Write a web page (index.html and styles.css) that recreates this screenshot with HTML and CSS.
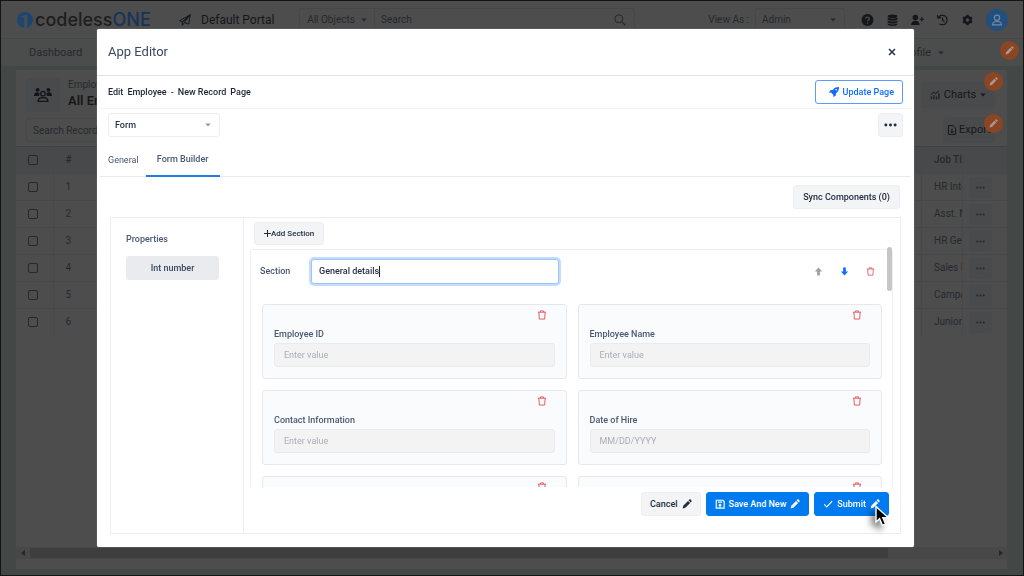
FILE: index.html
```html
<!DOCTYPE html>
<html lang="en">
<head>
<meta charset="utf-8">
<title>codelessONE - App Editor</title>
<link rel="stylesheet" href="styles.css">
</head>
<body>
<svg class="sprite" aria-hidden="true">
  <symbol id="trash" viewBox="0 0 16 16"><path d="M1.500 3.500h13M5.500 3V1.500h5V3M3 3.500l.8 11h8.400l.8-11" fill="none" stroke="currentColor" stroke-width="1.500"/></symbol>
  <symbol id="pencil" viewBox="0 0 16 16"><path d="M1 15l1-4.300L9.600 3l3.400 3.400-7.700 7.700zM10.500 2.100l1.200-1.200c.6-.6 1.400-.6 2 0l1.400 1.400c.6.6.6 1.400 0 2l-1.200 1.200z" fill="currentColor"/></symbol>
  <symbol id="caret" viewBox="0 0 8 5"><path d="M.5.5h7L4 4.500z" fill="currentColor"/></symbol>
  <symbol id="dots" viewBox="0 0 14 4"><g fill="currentColor"><circle cx="2" cy="2" r="1.600"/><circle cx="7" cy="2" r="1.600"/><circle cx="12" cy="2" r="1.600"/></g></symbol>
  <symbol id="arrow" viewBox="0 0 10 10"><path d="M5 .5l4 4.500H6.500v4.500h-3V5H1z" fill="currentColor"/></symbol>
</svg>

<div class="app">
  <header class="topbar">
    <a class="logo" href="#">
      <svg class="logo-mark" viewBox="0 0 16 16"><circle cx="8" cy="8" r="8" fill="#1c4670"/><path d="M4 5.200h3.200V16h3V3H7.500C6.800 4.200 5.800 4.200 4 4.200z" fill="#4d4d4d"/></svg>
      <span>codeless<b>ONE</b></span>
    </a>
    <div class="portal">
      <svg class="i12" viewBox="0 0 16 16"><path d="M15 1L1 9l3.500 1.700zM15 1L4.500 10.700V15l2.500-3M15 1l-2 12.500-6-2.200z" fill="none" stroke="currentColor" stroke-width="1.300" stroke-linejoin="round"/></svg>
      <span>Default Portal</span>
    </div>
    <div class="search">
      <button class="search-scope" type="button">All Objects <svg class="caret"><use href="#caret"/></svg></button>
      <input type="search" placeholder="Search" aria-label="Search">
      <svg class="i12" viewBox="0 0 16 16"><circle cx="6.500" cy="6.500" r="5.300" fill="none" stroke="currentColor" stroke-width="1.300"/><path d="M10.500 10.500L15 15" stroke="currentColor" stroke-width="1.500"/></svg>
    </div>
    <label class="viewas" for="role">View As :</label>
    <div class="select role"><select id="role"><option>Admin</option></select><svg class="caret"><use href="#caret"/></svg></div>
    <nav class="tools" aria-label="Tools">
      <button type="button" aria-label="Help"><svg viewBox="0 0 16 16"><circle cx="8" cy="8" r="8" fill="currentColor"/><path d="M5.500 6.300C5.500 3.400 10.500 3.400 10.500 6.200c0 1.700-2.400 1.700-2.400 3.400" fill="none" stroke="#4d4d4d" stroke-width="1.700"/><circle cx="8.100" cy="12" r="1.100" fill="#4d4d4d"/></svg></button>
      <button type="button" aria-label="Data"><svg viewBox="0 0 16 16"><g fill="currentColor"><ellipse cx="8" cy="3" rx="6.500" ry="2.500"/><path d="M1.500 4.800c2 2 11 2 13 0v2.400c-1 2.400-12 2.400-13 0zM1.500 8.600c2 2 11 2 13 0V11c-1 2.400-12 2.400-13 0zM1.500 12.400c2 2 11 2 13 0v1.200c-1 3-12 3-13 0z"/></g></svg></button>
      <button type="button" aria-label="Invite user"><svg viewBox="0 0 18 16"><circle cx="6" cy="4.500" r="3.800" fill="currentColor"/><path d="M0 15c0-8 12-8 12 0z" fill="currentColor"/><path d="M15 4v6M12 7h6" stroke="currentColor" stroke-width="1.600"/></svg></button>
      <button type="button" aria-label="History"><svg viewBox="0 0 16 16"><path d="M2.500 4.800A6.300 6.300 0 1 1 4 13M1.200 1.500l.8 4 4-.6M8.200 4.500V8.500l2.600 1.800" fill="none" stroke="currentColor" stroke-width="1.600"/></svg></button>
      <button type="button" aria-label="Settings"><svg viewBox="0 0 16 16"><circle cx="8" cy="8" r="4" fill="none" stroke="currentColor" stroke-width="3.400"/><path d="M8 1v3M8 12v3M2 4.500l2.600 1.500M11.400 10l2.600 1.500M2 11.500l2.600-1.500M11.400 6L14 4.500" stroke="currentColor" stroke-width="3"/></svg></button>
    </nav>
    <button class="avatar" type="button" aria-label="Account"><svg viewBox="0 0 16 16"><g fill="none" stroke="currentColor" stroke-width="1.500"><circle cx="8" cy="5" r="3.500"/><path d="M2 14.500c0-6 12-6 12 0z"/></g></svg></button>
  </header>

  <nav class="menubar">
    <a href="#">Dashboard</a>
    <a href="#">Profile <svg class="caret"><use href="#caret"/></svg></a>
    <button class="pin pin-nav" type="button" aria-label="Edit menu"><svg><use href="#pencil"/></svg></button>
  </nav>

  <main class="workspace">
    <section class="panel">
      <div class="panel-head">
        <div class="panel-icon"><svg viewBox="0 0 20 16"><g fill="currentColor"><circle cx="4" cy="2.300" r="2.200"/><circle cx="16" cy="2.300" r="2.200"/><path d="M0 9c0-5 5-5 6.300-2.500L5.500 9zM20 9c0-5-5-5-6.300-2.500l.8 2.500z"/></g><g fill="none" stroke="currentColor" stroke-width="1.500"><circle cx="10" cy="6.500" r="2.500"/><path d="M4.500 15c0-5.500 11-5.500 11 0z"/></g></svg></div>
        <div class="panel-title"><span>Employees</span><h1>All Employees</h1></div>
        <button class="dim-btn charts" type="button"><svg class="i10" viewBox="0 0 14 14"><path d="M1 7l4-4 3 2 5-4" fill="none" stroke="currentColor" stroke-width="1.400"/><path d="M2 9v4M5.500 7.500V13M9 9v4M12.500 5v8" stroke="currentColor" stroke-width="1.600"/></svg> Charts <svg class="caret"><use href="#caret"/></svg></button>
        <span class="pin pin-corner"><svg><use href="#pencil"/></svg></span>
      </div>
      <div class="panel-tools">
        <input type="search" placeholder="Search Records" aria-label="Search Records">
        <button class="dim-btn export" type="button"><svg class="i10" viewBox="0 0 14 14"><path d="M2 .8h6.500L12 4v9.200H2zM7 5v6M4.500 8.500L7 11l2.500-2.500" fill="none" stroke="currentColor" stroke-width="1.400"/></svg> Export</button>
        <span class="pin pin-corner"><svg><use href="#pencil"/></svg></span>
      </div>
      <table class="records">
        <colgroup><col class="c-check"><col><col class="c-job"><col class="c-act"></colgroup>
        <thead><tr><th><input type="checkbox" aria-label="Select all"></th><th>#</th><th>Job Title</th><th></th></tr></thead>
        <tbody>
          <tr><td><input type="checkbox" aria-label="Select 1"></td><td>1</td><td>HR Intern</td><td><button type="button" aria-label="Row actions"><svg><use href="#dots"/></svg></button></td></tr>
          <tr><td><input type="checkbox" aria-label="Select 2"></td><td>2</td><td>Asst. Manager</td><td><button type="button" aria-label="Row actions"><svg><use href="#dots"/></svg></button></td></tr>
          <tr><td><input type="checkbox" aria-label="Select 3"></td><td>3</td><td>HR Generalist</td><td><button type="button" aria-label="Row actions"><svg><use href="#dots"/></svg></button></td></tr>
          <tr><td><input type="checkbox" aria-label="Select 4"></td><td>4</td><td>Sales Lead</td><td><button type="button" aria-label="Row actions"><svg><use href="#dots"/></svg></button></td></tr>
          <tr><td><input type="checkbox" aria-label="Select 5"></td><td>5</td><td>Campaign Lead</td><td><button type="button" aria-label="Row actions"><svg><use href="#dots"/></svg></button></td></tr>
          <tr><td><input type="checkbox" aria-label="Select 6"></td><td>6</td><td>Junior Analyst</td><td><button type="button" aria-label="Row actions"><svg><use href="#dots"/></svg></button></td></tr>
        </tbody>
      </table>
      <div class="hscroll"><svg viewBox="0 0 4 6"><path d="M4 0v6L0 3z" fill="currentColor"/></svg><div class="hscroll-track"><div class="hscroll-thumb"></div></div><svg viewBox="0 0 4 6"><path d="M0 0v6l4-3z" fill="currentColor"/></svg></div>
    </section>
  </main>
</div>

<div class="backdrop">
  <div class="modal" role="dialog" aria-labelledby="dlg-title">
    <div class="modal-head">
      <h2 id="dlg-title">App Editor</h2>
      <button type="button" class="close" aria-label="Close"><svg viewBox="0 0 8 8"><path d="M1 1l6 6M7 1L1 7" stroke="currentColor" stroke-width="1.500"/></svg></button>
    </div>
    <div class="modal-body">
      <div class="bar page-bar">
        <p class="crumb"><span>Edit</span><span>Employee</span><span>-</span><span>New Record</span><span>Page</span></p>
        <button class="btn outline" type="button"><svg class="i10" viewBox="0 0 12 12"><path d="M12 0C8 0 6 1.500 4.500 3.500L1.500 4 0 7l2.500-.3 2.800 2.800L5 12l3-1.500.5-3C10.500 6 12 4 12 0z" fill="currentColor"/><circle cx="8.700" cy="3.300" r="1" fill="#fff"/></svg>Update Page</button>
      </div>
      <div class="bar type-bar">
        <div class="select type"><select aria-label="Component type"><option>Form</option></select><svg class="caret"><use href="#caret"/></svg></div>
        <button class="btn more" type="button" aria-label="More"><svg><use href="#dots"/></svg></button>
      </div>
      <div class="tabs" role="tablist">
        <button type="button" role="tab" aria-selected="false">General</button>
        <button type="button" role="tab" aria-selected="true" class="active">Form Builder</button>
      </div>
      <div class="sync"><button class="btn" type="button">Sync Components (0)</button></div>
      <div class="builder">
        <aside class="props">
          <h3>Properties</h3>
          <button class="chip" type="button">Int number</button>
        </aside>
        <div class="canvas">
          <button class="btn add" type="button"><svg viewBox="0 0 8 8"><path d="M4 0v8M0 4h8" stroke="currentColor" stroke-width="1.200"/></svg>Add Section</button>
          <div class="sections">
            <div class="section">
              <div class="section-head">
                <label for="section-name">Section</label>
                <div class="name-box"><input id="section-name" type="text" value="General details"><span class="text-caret"></span></div>
                <div class="section-tools">
                  <button type="button" class="up" aria-label="Move up"><svg><use href="#arrow"/></svg></button>
                  <button type="button" class="down" aria-label="Move down"><svg><use href="#arrow"/></svg></button>
                  <button type="button" class="del" aria-label="Delete section"><svg><use href="#trash"/></svg></button>
                </div>
              </div>
              <div class="fields">
                <div class="field"><button type="button" class="del" aria-label="Delete field"><svg><use href="#trash"/></svg></button><label for="f1">Employee ID</label><input id="f1" type="text" placeholder="Enter value" disabled></div>
                <div class="field"><button type="button" class="del" aria-label="Delete field"><svg><use href="#trash"/></svg></button><label for="f2">Employee Name</label><input id="f2" type="text" placeholder="Enter value" disabled></div>
                <div class="field"><button type="button" class="del" aria-label="Delete field"><svg><use href="#trash"/></svg></button><label for="f3">Contact Information</label><input id="f3" type="text" placeholder="Enter value" disabled></div>
                <div class="field"><button type="button" class="del" aria-label="Delete field"><svg><use href="#trash"/></svg></button><label for="f4">Date of Hire</label><input id="f4" type="text" placeholder="MM/DD/YYYY" disabled></div>
                <div class="field"><button type="button" class="del" aria-label="Delete field"><svg><use href="#trash"/></svg></button></div>
                <div class="field"><button type="button" class="del" aria-label="Delete field"><svg><use href="#trash"/></svg></button></div>
              </div>
            </div>
          </div>
          <div class="thumb"></div>
          <div class="actions">
            <button class="btn" type="button">Cancel<svg class="i10"><use href="#pencil"/></svg></button>
            <button class="btn primary" type="button"><svg class="i10" viewBox="0 0 12 12"><path d="M1.500 1.500h8l1.500 1.500v8H1.500zM3.500 3.800h5M6 11V6.500M4.300 8L6 6.300 7.700 8" fill="none" stroke="currentColor" stroke-width="1.400"/></svg>Save And New<svg class="i10"><use href="#pencil"/></svg></button>
            <button class="btn primary" type="button"><svg class="i10" viewBox="0 0 12 12"><path d="M1.500 6.500l3 3 6.500-7" fill="none" stroke="currentColor" stroke-width="1.400"/></svg>Submit<svg class="i10"><use href="#pencil"/></svg></button>
            <svg class="pointer" viewBox="0 0 14 21"><path d="M1 1v15.500l3.600-3.300 2.800 6.600 3.200-1.400-2.800-6.300H13z" fill="#000" stroke="#fff" stroke-width="1.400"/></svg>
          </div>
        </div>
      </div>
    </div>
  </div>
</div>
</body>
</html>
```

FILE: styles.css
```css
* { box-sizing: border-box; }
body { margin: 0; font: 9px/12px Roboto, "Liberation Sans", sans-serif; color: #3b4863; height: 100vh; overflow: hidden; background: #434745; }
button, input, select { font: inherit; color: inherit; margin: 0; }
button { background: none; border: 0; padding: 0; display: flex; align-items: center; justify-content: center; }
input::placeholder { color: inherit; opacity: 1; }
a { color: inherit; text-decoration: none; }
h1, h2, h3, p { margin: 0; font-weight: 400; }
svg { display: block; flex: none; }
.sprite { position: absolute; width: 0; height: 0; }
.i10 { width: 10px; height: 10px; }
.i12 { width: 12px; height: 12px; }
.caret { width: 6px; height: 4px; }

.app { display: flex; flex-direction: column; height: 100vh; border: 1px solid #141414; color: #25292f; font-size: 11px; }
.topbar { flex: none; display: flex; align-items: center; height: 38px; padding: 0 15px 0 16px; background: #4d4d4d; border-bottom: 1px solid #464646; }
.logo { display: flex; align-items: center; gap: 2px; font: 500 18px/20px Inter, sans-serif; color: #1e1e1e; width: 134px; }
.logo b { font-weight: 500; color: #16345a; }
.logo-mark { width: 16px; height: 16px; }
.portal { display: flex; align-items: center; gap: 10px; margin-left: 28px; color: #15171a; font-size: 12px; width: 120px; }
.search { display: flex; align-items: center; flex: 0 1 336px; height: 24px; border: 1px solid #474747; border-radius: 3px; padding-right: 8px; color: #26282b; }
.search-scope { gap: 6px; width: 75px; height: 100%; border-right: 1px solid #474747; font-size: 10px; }
.search input { flex: 1; min-width: 0; border: 0; background: none; padding: 0 6px; outline: 0; font-size: 10px; }
.viewas { margin-left: auto; font-size: 10px; }
.select { position: relative; display: flex; align-items: center; border: 1px solid #474747; border-radius: 3px; height: 24px; }
.select select { appearance: none; border: 0; background: none; width: 100%; height: 100%; padding: 0 6px; outline: 0; font-size: inherit; }
.select .caret { position: absolute; right: 8px; pointer-events: none; }
.role { width: 90px; margin: 0 16px 0 6px; font-size: 10px; }
.tools { display: flex; gap: 12px; color: #14171b; }
.tools svg { width: 13px; height: 12px; }
.avatar { width: 22px; height: 22px; border-radius: 50%; background: #21507f; color: #7588a0; margin-left: 12px; }
.avatar svg { width: 12px; height: 12px; }

.menubar { position: relative; flex: none; display: flex; align-items: center; justify-content: space-between; height: 27px; padding: 0 79px 0 28px; background: #4b4c4c; }
.menubar a { display: flex; align-items: center; gap: 7px; }
.pin { position: absolute; width: 19px; height: 19px; border-radius: 50%; background: #8a4525; color: #a9988e; display: flex; align-items: center; justify-content: center; }
.pin svg { width: 9px; height: 9px; }
.pin-nav { right: 4px; top: 2px; }
.pin-corner { right: 4px; top: 2px; }

.workspace { flex: 1; min-height: 0; padding: 4px 16px 6px 15px; display: flex; }
.panel { flex: 1; min-width: 0; display: flex; flex-direction: column; background: #4d4d4d; font-size: 10px; }
.panel-head { position: relative; display: flex; align-items: center; height: 44px; padding: 6px 12px 0 10px; gap: 8px; }
.panel-icon { width: 34px; height: 34px; border-radius: 4px; background: #494a4c; display: flex; align-items: center; justify-content: center; color: #12161c; }
.panel-icon svg { width: 18px; height: 16px; }
.panel-title { flex: 1; }
.panel-title h1 { font-size: 13px; line-height: 20px; font-weight: 600; color: #15171b; }
.dim-btn { background: #494a4b; border-radius: 3px; height: 26px; gap: 5px; color: #15181d; font-size: 11px; }
.charts { width: 74px; gap: 4px; }
.export { width: 52px; gap: 2px; }
.panel-tools { position: relative; display: flex; align-items: center; justify-content: space-between; height: 32px; padding: 2px 12px 2px 10px; }
.panel-tools input { width: 200px; height: 24px; border: 1px solid #474747; border-radius: 3px; background: none; padding: 0 6px; }
.panel-tools .pin { top: 0; }
.records { width: 100%; table-layout: fixed; border-collapse: collapse; }
.records tr { height: 27px; border-top: 1px solid #464748; }
.records thead tr { background: #47494a; border-top: 1px solid #404142; }
.records th, .records td { padding: 0 0 0 12px; text-align: left; font-weight: 400; white-space: nowrap; overflow: hidden; border-right: 1px solid #474848; }
.records th { font-weight: 500; }
.records td:last-child { padding: 0 0 0 6px; border-right: 0; }
.records input { appearance: none; display: block; width: 10px; height: 10px; border: 1px solid #25282b; border-radius: 2px; }
.records button { width: 23px; height: 21px; background: #494a4b; border-radius: 3px; }
.records svg { width: 9px; height: 3px; }
.c-check { width: 37px; }
.c-job { width: 41px; }
.c-act { width: 44px; }
.hscroll { display: flex; align-items: center; gap: 5px; height: 12px; margin-top: auto; margin-bottom: 10px; padding: 0 4px 0 5px; background: #484848; color: #262626; }
.hscroll svg { width: 4px; height: 6px; }
.hscroll-track { flex: 1; }
.hscroll-thumb { width: 89%; height: 10px; background: #3e3e3e; }

.backdrop { position: fixed; inset: 0; padding: 29px 110px 29px 97px; display: flex; }
.modal { flex: 1; min-width: 0; display: flex; flex-direction: column; background: #fff; border-radius: 2px; box-shadow: 0 0 1px #ccc; }
.modal-head { flex: none; display: flex; align-items: center; justify-content: space-between; height: 47px; padding: 0 18px 0 11px; border-bottom: 1px solid #e1e2e6; }
.modal-head h2 { font-size: 13px; line-height: 18px; color: #3b4863; }
.close svg { width: 8px; height: 8px; }
.close { color: #26324a; }
.modal-body { flex: 1; min-height: 0; display: flex; flex-direction: column; padding: 0 3px 13px; }
.bar { display: flex; align-items: center; justify-content: space-between; padding: 0 8px; }
.page-bar { height: 33px; border-bottom: 1px solid #f0f1f3; }
.crumb { display: flex; gap: 4px; color: #1b2434; font-weight: 500; }
.btn { height: 24px; padding: 0 9px; gap: 4px; border: 1px solid #eceef1; border-radius: 3px; background: #f3f4f6; color: #222d42; font-weight: 500; white-space: nowrap; }
.btn.outline { background: #fff; border-color: #5b9bfa; color: #0d6efd; padding: 0 8px 0 13px; }
.type-bar { height: 31px; }
.type { width: 112px; border-color: #eceef1; color: #26324a; font-weight: 500; }
.type .caret { color: #8d939c; }
.btn.more { width: 25px; padding: 0; }
.more svg { width: 13px; height: 4px; }
.tabs { display: flex; height: 37px; border-bottom: 1px solid #e8eaed; padding-left: 1px; color: #4a5872; }
.tabs button { padding: 3px 7px 0; }
.tabs .active { width: 74px; border-bottom: 2px solid #1a7fe8; padding: 3px 0 0; font-weight: 500; margin-bottom: -1px; }
.sync { display: flex; justify-content: flex-end; padding: 8px 11px 8px; }
.builder { flex: 1; min-height: 0; display: flex; margin: 0 10px; border: 1px solid #ececf3; }
.props { width: 133px; padding: 15px 24px 0 15px; border-right: 1px solid #ececf3; }
.props h3 { font-size: 9px; color: #4a5872; font-weight: 500; }
.chip { width: 100%; height: 24px; margin-top: 11px; border-radius: 3px; background: #e9ebef; color: #3b4863; font-weight: 500; }
.canvas { position: relative; flex: 1; min-width: 0; display: flex; flex-direction: column; padding: 4px 7px 17px 6px; }
.btn.add { align-self: flex-start; height: 23px; gap: 0; margin-left: 4px; font-size: 8px; }
.add svg { width: 7px; height: 7px; }
.sections { flex: 1; min-height: 0; margin-top: 4px; overflow: hidden; }
.section { border: 1px solid #eff0f3; border-radius: 3px; padding: 0 10px 0 11px; }
.section-head { display: flex; align-items: center; height: 42px; margin-left: -2px; }
.section-head label { width: 51px; color: #4a5872; font-weight: 500; }
.name-box { position: relative; flex: 0 1 248px; }
.name-box input { width: 100%; height: 25px; border: 1px solid #9cc3fb; border-radius: 3px; box-shadow: 0 0 0 2px #c6dcfd; outline: 0; padding: 0 7px; color: #26324a; font-weight: 500; }
.text-caret { position: absolute; left: 68px; top: 7px; width: 1px; height: 11px; background: #222; }
.section-tools { display: flex; gap: 17px; margin-left: auto; padding-right: 7px; }
.section-tools svg { width: 9px; height: 9px; }
.section-tools .up { color: #9aa0a8; }
.section-tools .down { color: #0d6efd; }
.down svg { transform: rotate(180deg); }
.del { color: #e4525b; }
.fields { display: grid; grid-template-columns: 1fr 1fr; gap: 11px; padding-top: 12px; }
.field { height: 75px; border: 1px solid #e6e8ee; border-radius: 3px; background: #fafbfd; padding: 5px 11px; }
.field .del { margin: 0 8px 8px auto; }
.field svg { width: 10px; height: 10px; }
.field label { display: block; color: #4a5872; font-weight: 500; margin-bottom: 3px; }
.field input { display: block; width: 100%; height: 24px; border: 1px solid #ebebed; border-radius: 3px; background: #f3f3f3; padding: 0 9px; color: #a9adb5; }
.thumb { position: absolute; right: 8px; top: 29px; width: 5px; height: 44px; border-radius: 3px; background: #c6c6c6; }
.actions { position: relative; display: flex; justify-content: flex-end; gap: 5px; padding: 5px 4px 0 0; }
.actions .btn { padding: 0 8px; }
.btn.primary { background: #007bef; border-color: #007bef; color: #fff; }
.pointer { position: absolute; right: 4px; top: 18px; width: 14px; height: 22px; filter: drop-shadow(-4px 4px 3px rgba(0, 0, 0, .5)); }
```
